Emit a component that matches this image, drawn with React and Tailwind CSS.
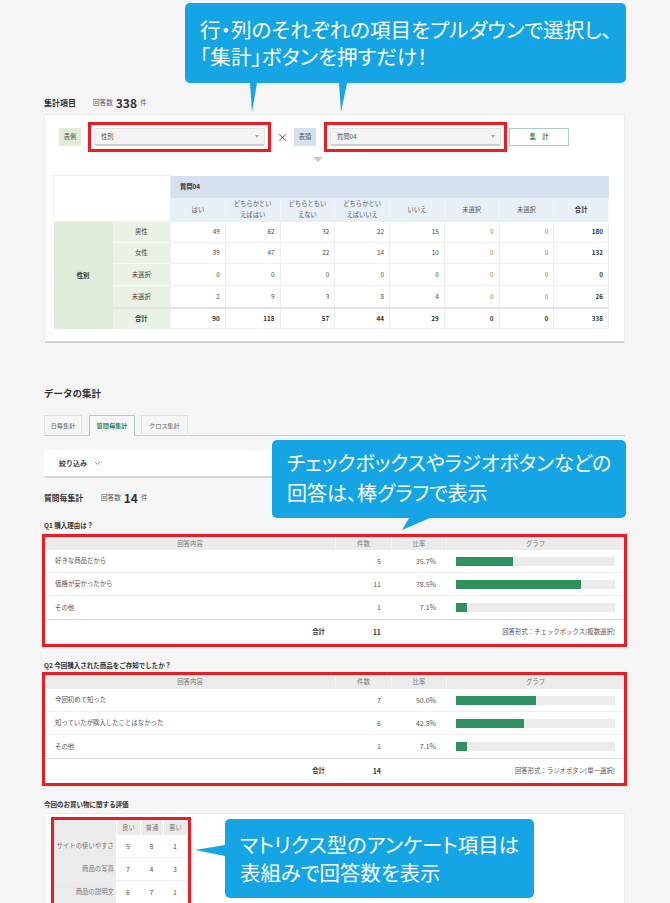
import React from 'react';

const FONT = { fontFamily: '"Noto Sans CJK JP", "Noto Sans", sans-serif' };

const crossHead = ['はい', 'どちらかとい\nえばはい', 'どちらともい\nえない', 'どちらかとい\nえばいいえ', 'いいえ', '未選択', '未選択', '合計'];
const crossRows = [
  { label: '男性', h: 'h-[21px]', values: [49, 62, 32, 22, 15, 0, 0, 180] },
  { label: '女性', h: 'h-[21px]', values: [39, 47, 22, 14, 10, 0, 0, 132] },
  { label: '未選択', h: 'h-[22px]', values: [0, 0, 0, 0, 0, 0, 0, 0] },
  { label: '未選択', h: 'h-[22px]', values: [2, 9, 3, 8, 4, 0, 0, 26] },
];
const crossTotal = [90, 118, 57, 44, 29, 0, 0, 338];

const q1 = [
  { text: '好きな商品だから', count: 5, rate: '35.7%', w: 35.7 },
  { text: '価格が安かったから', count: 11, rate: '78.5%', w: 78.5 },
  { text: 'その他', count: 1, rate: '7.1%', w: 7.1 },
];
const q2 = [
  { text: '今回初めて知った', count: 7, rate: '50.0%', w: 50 },
  { text: '知っていたが購入したことはなかった', count: 6, rate: '42.8%', w: 42.8 },
  { text: 'その他', count: 1, rate: '7.1%', w: 7.1 },
];

const matrix = [
  ['サイトの使いやすさ', 5, 8, 1],
  ['商品の写真', 7, 4, 3],
  ['商品の説明文', 6, 7, 1],
];

const Select = ({ value }) => (
  <div className="border-[3px] border-[#ed1c24] p-[3px] w-[183px] shrink-0">
    <div className="h-[18px] rounded-[2px] bg-[#f4f4f4] border border-[#e4e4e4] border-b-2 border-b-[#cfcfcf] flex items-center justify-between pl-[6px] pr-[5px] text-[6.3px] text-[#555]">
      <span>{value}</span>
      <span className="w-0 h-0 border-x-[2.5px] border-x-transparent border-t-[3px] border-t-[#aaa]" />
    </div>
  </div>
);

const CrossTable = () => (
  <table className="table-fixed border-collapse w-[556px] text-[6.3px] text-[#444]">
    <colgroup>
      <col className="w-[59px]" />
      <col className="w-[58px]" />
      <col span="8" />
    </colgroup>
    <thead>
      <tr className="h-[22px]">
        <th colSpan="2" rowSpan="2" className="bg-white border border-[#eeeeee]" />
        <th colSpan="8" className="bg-[#d6e1ef] text-left pl-[9px] font-bold text-[#333]">質問04</th>
      </tr>
      <tr className="h-[24px]">
        {crossHead.map((h, i) => (
          <th key={i} className={`bg-[#e8eff7] border-x border-[#f2f5f9] whitespace-pre-line leading-[11px] ${i === 7 ? 'font-bold text-[#333]' : 'font-normal text-[#555]'}`}>{h}</th>
        ))}
      </tr>
    </thead>
    <tbody>
      {crossRows.map((row, i) => (
        <tr key={i} className={row.h}>
          {i === 0 && <td rowSpan="5" className="bg-[#dfebd8] text-center font-bold text-[#333]">性別</td>}
          <td className="bg-[#e9f2e4] text-center border-b border-[#f5f8f3]">{row.label}</td>
          {row.values.map((v, j) => (
            <td key={j} className={`text-right pr-[5px] border border-[#eeeeee] ${j === 7 ? 'font-bold text-[#333]' : ''} ${j === 5 || j === 6 ? 'text-[#8a7a5c]' : ''}`}>{v}</td>
          ))}
        </tr>
      ))}
      <tr className="h-[21px] border-t-2 border-[#e4e4e4]">
        <td className="bg-[#e9f2e4] text-center font-bold text-[#333]">合計</td>
        {crossTotal.map((v, j) => (
          <td key={j} className="text-right pr-[5px] font-bold text-[#333] border border-[#eeeeee]">{v}</td>
        ))}
      </tr>
    </tbody>
  </table>
);

const QuestionTable = ({ rows, total, format, headH, className }) => (
  <div className={`border-[3px] border-[#ed1c24] bg-white -mx-[2px] text-[6.4px] text-[#555] ${className}`}>
    <div className={`grid grid-cols-[290px_56px_55px_178px] bg-[#ebebeb] text-center text-[#777] items-center ${headH}`}>
      <div>回答内容</div>
      <div className="border-l border-[#f5f5f5] h-full flex items-center justify-center">件数</div>
      <div className="border-l border-[#f5f5f5] h-full flex items-center justify-center">比率</div>
      <div className="border-l border-[#f5f5f5] h-full flex items-center justify-center">グラフ</div>
    </div>
    {rows.map((r, i) => (
      <div key={i} className={`grid grid-cols-[290px_56px_55px_178px] items-center border-b ${i === 2 ? 'h-[24px] border-[#dddddd]' : 'h-[23px] border-[#eeeeee]'}`}>
        <div className="pl-[10px]">{r.text}</div>
        <div className="text-right pr-[10px] text-[7px]">{r.count}</div>
        <div className="text-right pr-[10px] text-[7px]">{r.rate}</div>
        <div className="pl-[10px] pr-[9px]">
          <div className="h-[9px] bg-[#ebebeb]">
            <div className="h-full bg-[#30905f]" style={{ width: `${r.w}%` }} />
          </div>
        </div>
      </div>
    ))}
    <div className="grid grid-cols-[290px_56px_233px] items-center h-[24px]">
      <div className="text-right pr-[10px] font-bold text-[#333]">合計</div>
      <div className="text-right pr-[10px] font-bold text-[#333] text-[7px]">{total}</div>
      <div className="text-right pr-[9px]">{format}</div>
    </div>
  </div>
);

export default function App() {
  return (
    <div className="relative w-[670px] h-[903px] overflow-hidden bg-[#f5f5f5] pl-[44px] pr-[45px] pt-[96px] text-[#333]" style={FONT}>
      {/* 集計項目 */}
      <div className="flex items-center h-[13px]">
        <span className="text-[8px] font-bold w-[49px]">集計項目</span>
        <span className="text-[6.6px] text-[#555]">回答数</span>
        <span className="text-[12px] font-bold ml-[3px] leading-none">338</span>
        <span className="text-[6.6px] text-[#555] ml-[3px]">件</span>
      </div>

      <div className="mt-[5px] h-[229px] bg-white rounded-[2px] border border-[#ececec] border-b-2 border-b-[#d4d4d4] pt-[7px] pl-[8px]">
        <div className="flex items-center">
          <div className="w-[22px] h-[18px] ml-[6px] bg-[#e0ecd8] flex items-center justify-center text-[6.3px] text-[#555]">表側</div>
          <div className="ml-[7px]"><Select value="性別" /></div>
          <div className="w-[23px] text-center text-[11px] text-[#555]">×</div>
          <div className="w-[22px] h-[18px] bg-[#d6e1ef] flex items-center justify-center text-[6.3px] text-[#555]">表頭</div>
          <div className="ml-[8px]"><Select value="質問04" /></div>
          <div className="w-[60px] h-[18px] ml-[2px] border border-[#a9cfbd] flex items-center justify-center text-[6.3px] font-bold text-[#2e8b5f]">集　計</div>
        </div>
        <div className="w-0 h-0 ml-[260px] mt-[5px] border-x-[5px] border-x-transparent border-t-[5px] border-t-[#c8c8c8]" />
        <div className="mt-[13px]"><CrossTable /></div>
      </div>

      {/* データの集計 */}
      <h2 className="mt-[44px] text-[9.5px] font-bold leading-[13px]">データの集計</h2>
      <div className="mt-[15px] h-[21px] flex gap-[6px] border-b border-[#b9d3c8] text-[6.2px] text-[#666]">
        <div className="w-[38px] h-[21px] mr-[1px] border border-b-0 border-[#e2e2e2] flex items-center justify-center">日毎集計</div>
        <div className="w-[46px] h-[21px] bg-[#f5f5f5] border border-b-0 border-[#a9cfbd] font-bold text-[#2e8b5f] flex items-center justify-center">質問毎集計</div>
        <div className="w-[47px] h-[21px] border border-b-0 border-[#e2e2e2] flex items-center justify-center">クロス集計</div>
      </div>
      <div className="mt-[14px] h-[28px] bg-white border-b-2 border-[#d4d4d4] rounded-[2px] flex items-center pl-[15px] text-[7px] font-bold text-[#444]">
        絞り込み
        <svg className="ml-[7px]" width="7" height="5" viewBox="0 0 7 5" fill="none" stroke="#777" strokeWidth="0.8"><path d="M1 1l2.5 2.5L6 1" /></svg>
      </div>
      <div className="mt-[13px] flex items-center h-[13px]">
        <span className="text-[7.8px] font-bold w-[57px]">質問毎集計</span>
        <span className="text-[6.6px] text-[#555]">回答数</span>
        <span className="text-[12px] font-bold ml-[3px] leading-none">14</span>
        <span className="text-[6.6px] text-[#555] ml-[3px]">件</span>
      </div>

      <div className="mt-[16px] text-[6.5px] font-bold leading-[10px]">Q1 購入理由は？</div>
      <QuestionTable className="mt-[4px]" rows={q1} total={11} format="回答形式：チェックボックス[複数選択]" headH="h-[13px]" />

      <div className="mt-[13px] text-[6.5px] font-bold leading-[10px]">Q2 今回購入された商品をご存知でしたか？</div>
      <QuestionTable className="mt-[2px]" rows={q2} total={14} format="回答形式：ラジオボタン[単一選択]" headH="h-[14px]" />

      <div className="mt-[13px] text-[6.5px] font-bold leading-[10px]">今回のお買い物に関する評価</div>
      <div className="mt-[4px] h-[110px] bg-white border border-[#ececec] rounded-[2px] pt-[3px] pl-[6px]">
        <div className="w-[140px] border-[3px] border-[#ed1c24] pt-[1px] text-[6.4px] text-[#555]">
          <div className="grid grid-cols-[62px_24px_23px_24px] h-[14px] items-center text-center text-[#777]">
            <div className="bg-[#ebebeb] h-full" />
            <div className="bg-[#ebebeb] h-full border-l border-white flex items-center justify-center">良い</div>
            <div className="bg-[#ebebeb] h-full border-l border-white flex items-center justify-center">普通</div>
            <div className="bg-[#ebebeb] h-full border-l border-white flex items-center justify-center">悪い</div>
          </div>
          {matrix.map((m) => (
            <div key={m[0]} className="grid grid-cols-[62px_24px_23px_24px] h-[23px] items-center text-center border-b border-[#eeeeee] text-[7px]">
              <div className="bg-[#ebebeb] h-full flex items-center justify-end pr-[2px] text-[#777] text-[6.4px] whitespace-nowrap">{m[0]}</div>
              <div>{m[1]}</div>
              <div>{m[2]}</div>
              <div>{m[3]}</div>
            </div>
          ))}
        </div>
      </div>

      {/* 吹き出し */}
      <div className="absolute left-[185px] top-[3px] w-[441px] h-[80px] rounded-[5px] bg-[#15a5e5] text-white text-[20.6px] [font-feature-settings:'palt'] leading-[27px] pl-[15px] pt-[13px] whitespace-nowrap">
        行・列のそれぞれの項目をプルダウンで選択し、<br />「集計」ボタンを押すだけ！
      </div>
      <svg className="absolute left-[245px] top-[83px]" width="105" height="30" viewBox="0 0 105 30" fill="#15a5e5">
        <path d="M5 0h7l-5 29zM94 0h8l-6 29z" />
      </svg>

      <div className="absolute left-[272px] top-[440px] w-[354px] h-[78px] rounded-[5px] bg-[#15a5e5] text-white text-[20px] [font-feature-settings:'palt'] leading-[30px] pl-[15px] pt-[8px] whitespace-nowrap">
        チェックボックスやラジオボタンなどの<br />回答は、棒グラフで表示
      </div>
      <svg className="absolute left-[400px] top-[518px]" width="32" height="13" viewBox="0 0 32 13" fill="#15a5e5">
        <path d="M9 0h21L2 12z" />
      </svg>

      <div className="absolute left-[225px] top-[819px] w-[309px] h-[79px] rounded-[5px] bg-[#15a5e5] text-white text-[20.4px] [font-feature-settings:'palt'] leading-[28px] pl-[15px] pt-[11px] whitespace-nowrap">
        マトリクス型のアンケート項目は<br />表組みで回答数を表示
      </div>
      <svg className="absolute left-[195px] top-[845px]" width="31" height="11" viewBox="0 0 31 11" fill="#15a5e5">
        <path d="M30 0v11L0 5z" />
      </svg>
    </div>
  );
}
